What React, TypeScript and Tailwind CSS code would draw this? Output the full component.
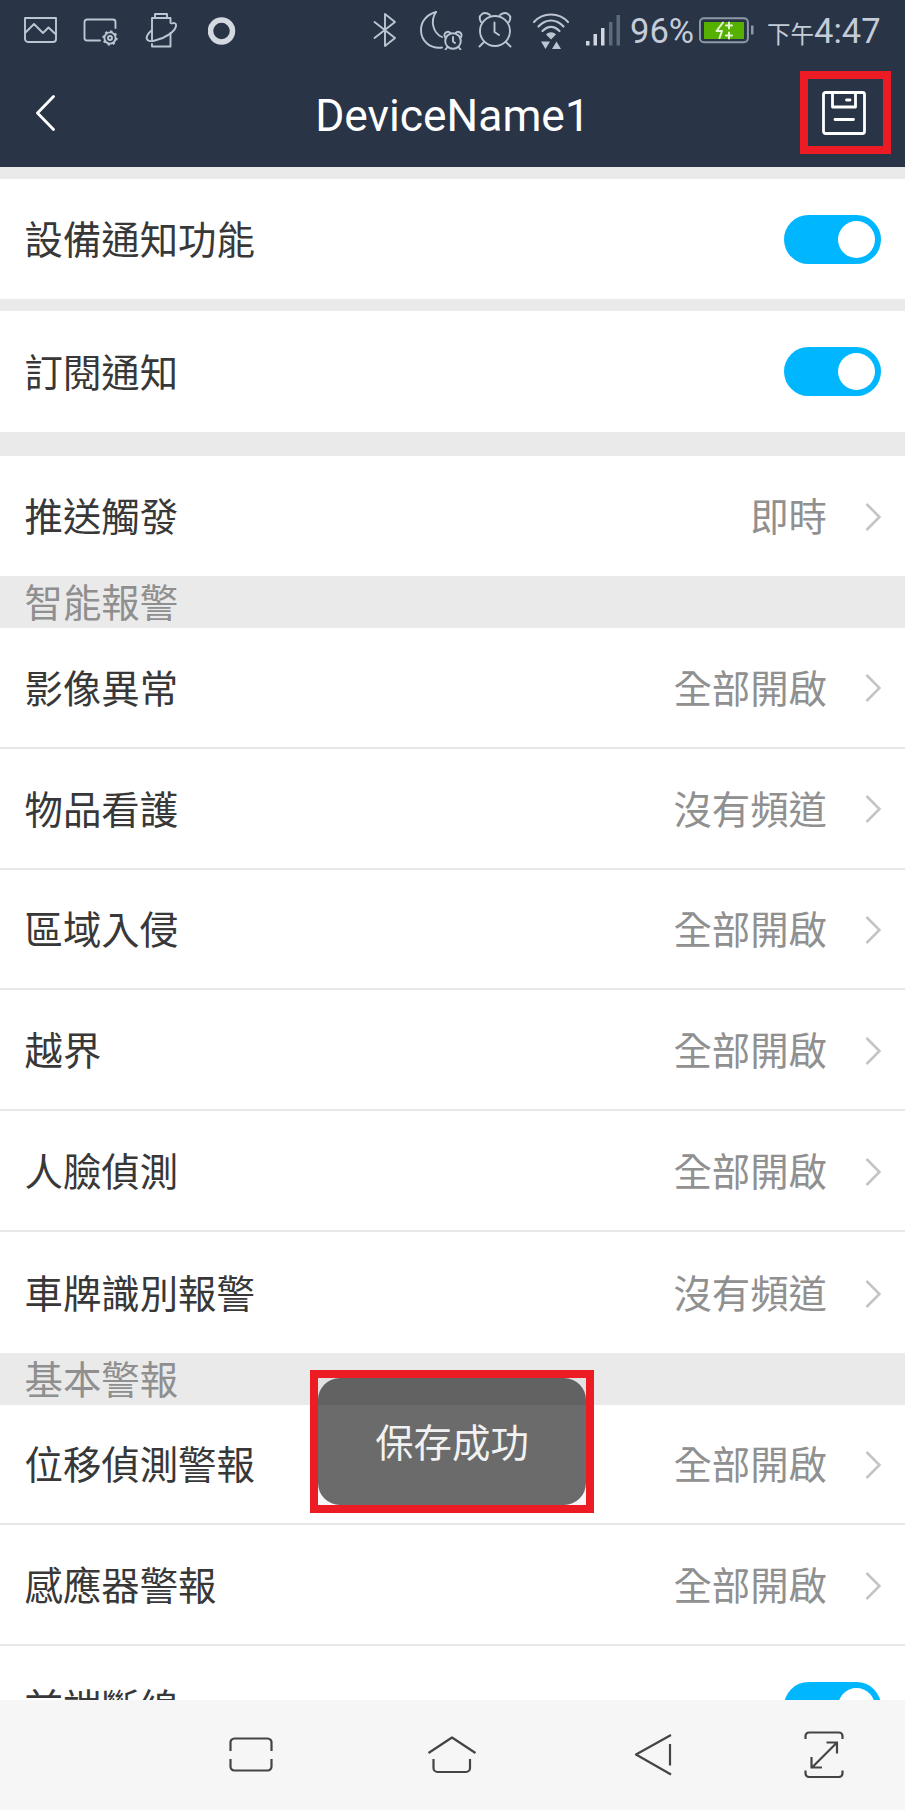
import type { ReactNode } from "react";

type Item = { label: string; value: string };

const smartAlarms: Item[] = [
  { label: "影像異常", value: "全部開啟" },
  { label: "物品看護", value: "沒有頻道" },
  { label: "區域入侵", value: "全部開啟" },
  { label: "越界", value: "全部開啟" },
  { label: "人臉偵測", value: "全部開啟" },
  { label: "車牌識別報警", value: "沒有頻道" },
];

const basicAlarms: Item[] = [
  { label: "位移偵測警報", value: "全部開啟" },
  { label: "感應器警報", value: "全部開啟" },
];

function Toggle() {
  return (
    <span className="flex h-[49px] w-[97px] shrink-0 items-center justify-end rounded-full bg-[#00b7ff] pr-1.5">
      <span className="h-[37px] w-[37px] rounded-full bg-white" />
    </span>
  );
}

function Row({ label, children, className = "h-[121px]" }: { label: string; children: ReactNode; className?: string }) {
  return (
    <div className={`flex shrink-0 items-center justify-between bg-white pl-[24.5px] pr-6 ${className}`}>
      <span className="pb-[3px] text-[#383838]">{label}</span>
      {children}
    </div>
  );
}

function Value({ text }: { text: string }) {
  return (
    <span className="flex items-center gap-[38px]">
      <span className="pb-[3px] text-[#909090]">{text}</span>
      <svg className="mt-[2px]" width="16" height="30" viewBox="0 0 16 30" fill="none" stroke="#c4c4c4" strokeWidth="2.6">
        <path d="M1.5 2 14.5 15 1.5 28" />
      </svg>
    </span>
  );
}

function SectionTitle({ children }: { children: ReactNode }) {
  return <div className="flex h-[52px] shrink-0 items-center pb-1 pl-[24.5px] text-[#8f8f8f]">{children}</div>;
}

function StatusIcon({ width, className, children }: { width: number; className?: string; children: ReactNode }) {
  return (
    <svg
      width={width}
      height="40"
      viewBox={`0 0 ${width} 40`}
      fill="none"
      stroke="currentColor"
      strokeWidth="1.9"
      strokeLinecap="round"
      strokeLinejoin="round"
      className={`shrink-0 ${className ?? ""}`}
    >
      {children}
    </svg>
  );
}

function StatusBar() {
  return (
    <div className="flex h-[60px] items-center pl-6 text-[#bdc5d2]">
      <StatusIcon width={34}>
        <path d="M1 8h31v21a3 3 0 0 1-3 3H4a3 3 0 0 1-3-3z" />
        <path d="m1.5 22.5 8.500-8.500 9 9 5.500-5.500 7.500 7" />
      </StatusIcon>
      <StatusIcon width={36} className="ml-[25px]">
        <path d="M32.500 18v-6a2.500 2.500 0 0 0-2.500-2.500H4A2.500 2.500 0 0 0 1.500 12v16A2.500 2.500 0 0 0 4 30.500h13" />
        <circle cx="27" cy="28" r="5.600" />
        <circle cx="27" cy="28" r="6.700" strokeWidth="1.900" strokeDasharray="2.300 2.960" strokeLinecap="butt" />
        <circle cx="27" cy="28" r="2" />
      </StatusIcon>
      <StatusIcon width={34} className="ml-[26px]">
        <path d="M10 8V4h12v4" />
        <path d="M7 29.500V8h18.500v5M25.500 23v13.500H7V34" />
        <path d="M7 20C-1 27 0 33 10 30.500c11-2.500 20-9 21-14.500.5-3-2-3.500-4-2.500" />
      </StatusIcon>
      <StatusIcon width={28} className="ml-[29px] text-[#d4d8df]">
        <circle cx="13.500" cy="21" r="11" strokeWidth="5.500" />
      </StatusIcon>

      <StatusIcon width={24} className="ml-[137px]">
        <path d="m1.500 12 20.500 16-10 8V4l10 8L1.500 28" />
      </StatusIcon>
      <StatusIcon width={44} className="ml-[23px]">
        <path d="M16 2C7 4.500 1 11 1 20c0 11 9 19 21 17.500" />
        <path d="M16 2c-6 9-3 21 6 25" />
        <circle cx="33" cy="31" r="7.800" />
        <path d="M25 27c-2-4 3-7 5.500-4M41 27c2-4-3-7-5.500-4M33 27v4.500l2 1.500M27.500 37l-2 2.500M38.500 37l2 2.500" />
      </StatusIcon>
      <StatusIcon width={36} className="ml-[14px]">
        <circle cx="17" cy="21" r="15" />
        <path d="M3 12C-1 5 6 .5 12 5M31 12c4-7-3-11.500-9-7M16.500 12.500V22l4.500 3M6 32l-4.500 4.500M28 32l4.500 4.500" />
      </StatusIcon>
      <StatusIcon width={38} className="ml-[18px]">
        <path d="M2 12C11 2 27 2 36 12M6.500 16.500c7.500-8 17.500-8 25 0M10.500 21c5.500-5.500 11.500-5.500 17 0" strokeWidth="2.200" />
        <path d="M14 24.500c3-3 7-3 10 0l-5 5z" fill="currentColor" stroke="none" />
        <path d="M9 31.500h9l-4.500 7.500zM20 39h9l-4.500-7.500z" fill="currentColor" stroke="none" />
      </StatusIcon>
      <StatusIcon width={36} className="ml-[15px]">
        <g fill="currentColor" stroke="none">
          <path d="M1 31h3.500v4.500H1zM8.500 24H12v11.500H8.500zM16 18h3.500v17.500H16z" fill="#d0d5de" />
          <path d="M24 12h3.500v23.500H24zM31.500 5H35v30.500h-3.500z" fill="#5d6a7b" />
        </g>
      </StatusIcon>

      <span className="ml-[9px] w-[69px] whitespace-nowrap pt-[3px] font-['Roboto'] text-[34.500px] leading-none text-[#c5ccd8]">96%</span>
      <StatusIcon width={56}>
        <rect x=".9" y="8.200" width="48" height="24" rx="4" stroke="#8e99a8" strokeWidth="2" />
        <path d="M52 15.500h2.500v9H52z" fill="#8e99a8" stroke="none" />
        <path d="M5 12h40v17H5z" fill="#56b000" stroke="none" />
        <path d="m24 12.500-6.500 8.500h5.500L20.500 28M27 15.500h6M30 12.500v6M27 25.500h6M30 22.500v6" stroke="#e4f8d4" strokeWidth="2" />
      </StatusIcon>
      <span className="ml-[12px] flex items-baseline whitespace-nowrap pt-[3px] font-['Roboto'] text-[34.500px] leading-none text-[#c5ccd8]">
        <span className="font-['Noto_Sans_CJK_TC'] text-[23.500px]">下午</span>4:47
      </span>
    </div>
  );
}

function TitleBar() {
  return (
    <div className="flex h-[107px] items-center justify-between pb-[2px] pl-[35px] pr-[14px] text-white">
      <svg width="70" height="36" viewBox="0 0 70 36" fill="none" stroke="currentColor" strokeWidth="2.800" strokeLinecap="round" strokeLinejoin="round">
        <path d="M18.500 1.500 2.500 18l16 16.500" />
      </svg>
      <h1 className="pt-[7px] font-['Roboto'] text-[44.400px] leading-none">DeviceName1</h1>
      <div className="flex h-[83px] w-[91px] items-center justify-center border-8 border-[#ed1c24] pr-[2px]">
        <svg width="44" height="44" viewBox="0 0 44 44" fill="none" stroke="currentColor" strokeWidth="2.800" strokeLinecap="round" strokeLinejoin="round">
          <rect x="1.500" y="1.500" width="41" height="41" rx="2" />
          <path d="M10.500 1.500V16h23V1.500M24.500 9h3.500M13 28.500h18.500" />
        </svg>
      </div>
    </div>
  );
}

function NavBar() {
  return (
    <nav className="flex h-[110px] shrink-0 items-center bg-[#f6f6f6] pl-[229px] [&>svg]:shrink-0">
      <svg width="44" height="48" viewBox="0 0 44 48" fill="none" stroke="#444" strokeWidth="2.200">
        <path d="M1.500 20v-8a4 4 0 0 1 4-4.500h33a4 4 0 0 1 4 4.500v8M1.500 28v7a4 4 0 0 0 4 4.500h33a4 4 0 0 0 4-4.500v-7" />
      </svg>
      <svg className="ml-[154px]" width="50" height="48" viewBox="0 0 50 48" fill="none" stroke="#444" strokeWidth="2.200" strokeLinejoin="round">
        <path d="M1.500 22 25 6.500 48.500 22M6.500 28v9a4 4 0 0 0 4 4H39a4 4 0 0 0 4-4v-9" />
      </svg>
      <svg className="ml-[157px]" width="38" height="48" viewBox="0 0 38 48" fill="none" stroke="#444" strokeWidth="2.200" strokeLinejoin="round">
        <path d="M37 4 2 23.500 37 43.500M36 13v21.500" />
      </svg>
      <svg className="ml-[132px]" width="41" height="48" viewBox="0 0 41 48" fill="none" stroke="#444" strokeWidth="2.200">
        <path d="M1.500 8V5a3.500 3.500 0 0 1 3.500-3.500h30A3.500 3.500 0 0 1 38.500 5v3M1.500 39.500v3A3.500 3.500 0 0 0 5 46h30a3.500 3.500 0 0 0 3.500-3.500v-3" />
        <path d="M8 36.500 32.500 12M22.500 11.500h10.500v11M7.500 26v10.500h10.500" />
      </svg>
    </nav>
  );
}

export default function App() {
  return (
    <div lang="zh-Hant" className="relative flex h-[1810px] w-[905px] flex-col overflow-hidden bg-[#eaeaea] font-['Noto_Sans_CJK_TC',sans-serif] text-[38.400px] leading-none">
      <header className="h-[167px] shrink-0 bg-[#293447]">
        <StatusBar />
        <TitleBar />
      </header>

      <main className="flex min-h-0 flex-1 flex-col overflow-hidden pt-3">
        <Row label="設備通知功能" className="h-[120px]">
          <Toggle />
        </Row>
        <Row label="訂閱通知" className="mt-3 h-[121px]">
          <Toggle />
        </Row>
        <Row label="推送觸發" className="mt-6 h-[120px]">
          <Value text="即時" />
        </Row>

        <SectionTitle>智能報警</SectionTitle>
        <div className="flex h-[725px] shrink-0 flex-col divide-y-2 divide-[#e8e8e8]">
          {smartAlarms.map((item) => (
            <Row key={item.label} label={item.label} className="h-1/6">
              <Value text={item.value} />
            </Row>
          ))}
        </div>

        <SectionTitle>基本警報</SectionTitle>
        <div className="flex shrink-0 flex-col divide-y-2 divide-[#e8e8e8]">
          {basicAlarms.map((item) => (
            <Row key={item.label} label={item.label} className="h-[120.400px]">
              <Value text={item.value} />
            </Row>
          ))}
          <Row label="前端斷線">
            <Toggle />
          </Row>
        </div>
      </main>

      <NavBar />

      <div className="absolute left-[310px] top-[1370px] h-[143px] w-[284px] border-8 border-[#ed1c24] bg-black/[0.03]">
        <div className="flex h-full items-center justify-center rounded-[22px] bg-[#050505]/58 pb-[2px] text-[#f2f2f2]">保存成功</div>
      </div>
    </div>
  );
}
